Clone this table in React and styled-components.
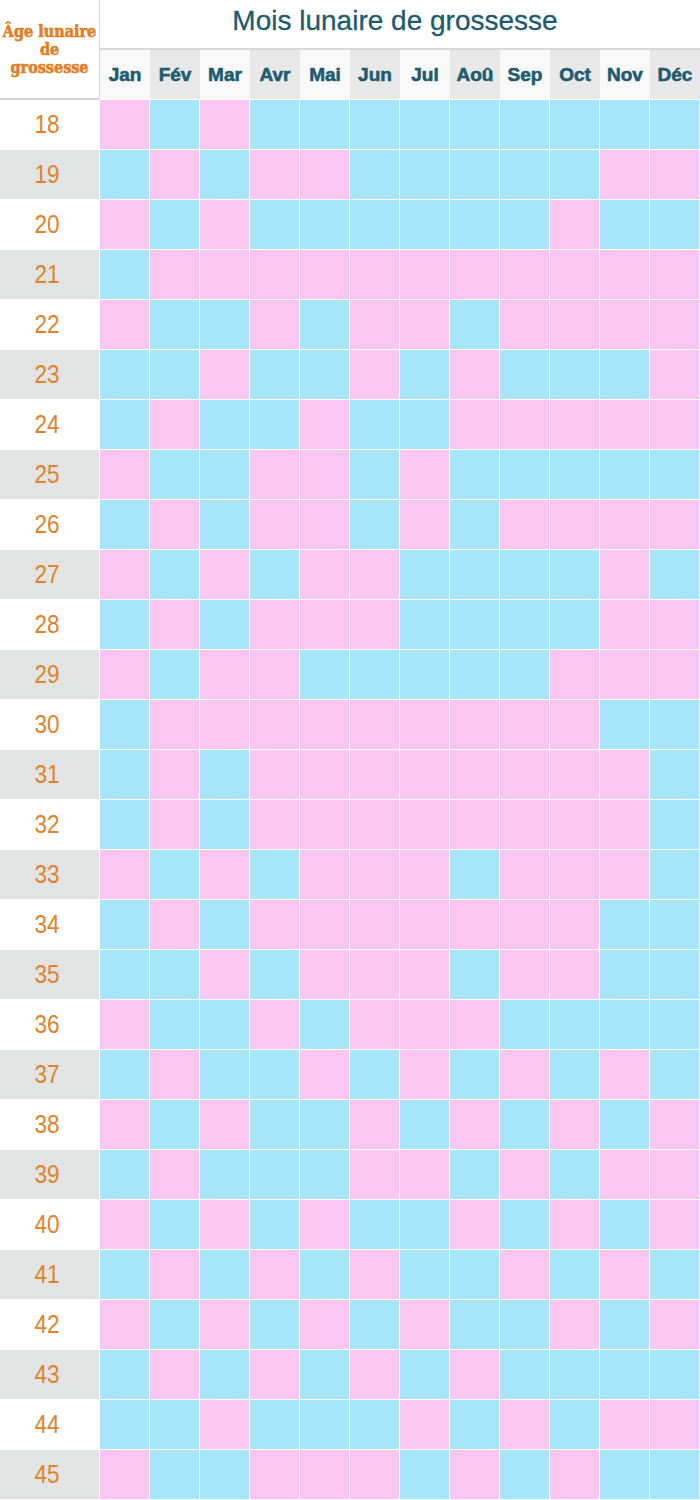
import styled, { createGlobalStyle } from "styled-components";

const GlobalStyle = createGlobalStyle`
  html, body {
    margin: 0;
    padding: 0;
    background: #ffffff;
  }
`;

const MONTHS = ["Jan", "Fév", "Mar", "Avr", "Mai", "Jun", "Jul", "Aoû", "Sep", "Oct", "Nov", "Déc"];

// P = fille (rose), B = garçon (bleu)
const CHART = {
  18: "PBPBBBBBBBBB",
  19: "BPBPPBBBBBPP",
  20: "PBPBBBBBBPBB",
  21: "BPPPPPPPPPPP",
  22: "PBBPBPPBPPPP",
  23: "BBPBBPBPBBBP",
  24: "BPBBPBBPPPPP",
  25: "PBBPPBPBBBBB",
  26: "BPBPPBPBPPPP",
  27: "PBPBPPBBBBPB",
  28: "BPBPPPBBBBPP",
  29: "PBPPBBBBBPPP",
  30: "BPPPPPPPPPBB",
  31: "BPBPPPPPPPPB",
  32: "BPBPPPPPPPPB",
  33: "PBPBPPPBPPPB",
  34: "BPBPPPPPPPBB",
  35: "BBPBPPPBPPBB",
  36: "PBBPBPPPBBBB",
  37: "BPBBPBPBPBPB",
  38: "PBPBBPBPBPBP",
  39: "BPBBBPPBPBPP",
  40: "PBPBPBBPBPBP",
  41: "BPBPBPBBPBPB",
  42: "PBPBPBPBBPBP",
  43: "BPBPBPBPBBBB",
  44: "BBPBBBPBPBPP",
  45: "PBBPPPBPBPBB",
};

const Chart = styled.div`
  display: grid;
  grid-template-columns: 100px repeat(12, 50px);
  grid-template-rows: repeat(30, 50px);
  width: 700px;
  background: #ffffff;
`;

const Corner = styled.div`
  grid-column: 1;
  grid-row: 1 / span 2;
  display: flex;
  align-items: center;
  justify-content: center;
  box-sizing: border-box;
  padding-top: 2px;
  border-right: 1px solid #d6d6d6;
  border-bottom: 2px solid #d4d4d4;
  font-family: "DejaVu Serif Condensed", "Liberation Serif", serif;
  font-weight: 700;
  font-size: 16px;
  line-height: 18px;
  color: #e07f24;
  -webkit-text-stroke: 0.6px #e07f24;
  text-align: center;
`;

const Title = styled.div`
  grid-column: 2 / span 12;
  grid-row: 1;
  display: flex;
  align-items: center;
  justify-content: center;
  padding-right: 10px;
  padding-bottom: 6px;
  font-family: "Liberation Sans", Arial, sans-serif;
  font-size: 28px;
  color: #1e5b6f;
  -webkit-text-stroke: 0.3px #1e5b6f;
  border-bottom: 2px solid #d8d8d8;
  box-sizing: border-box;
`;

const MonthCell = styled.div`
  grid-row: 2;
  display: flex;
  align-items: center;
  justify-content: center;
  background: ${(p) => (p.$shaded ? "#e8e8e8" : "#f8f8f8")};
  font-family: "Liberation Sans", Arial, sans-serif;
  font-weight: 700;
  font-size: 19px;
  color: #1e5b6f;
  -webkit-text-stroke: 0.6px #1e5b6f;
  border-bottom: 1px solid #ffffff;
  box-sizing: border-box;
`;

const AgeCell = styled.div`
  grid-column: 1;
  display: flex;
  align-items: center;
  justify-content: center;
  padding-right: 6px;
  background: ${(p) => (p.$shaded ? "#e2e4e4" : "#ffffff")};
  border-bottom: 1px solid #ffffff;
  border-right: 1px solid #ffffff;
  box-sizing: border-box;
`;

const AgeNumber = styled.span`
  display: inline-block;
  transform: scaleX(0.9);
  font-family: "Liberation Sans", Arial, sans-serif;
  font-size: 25px;
  color: #e0822a;
`;

const GenderCell = styled.div`
  background: ${(p) => (p.$girl ? "#f9c6f2" : "#a7e5f8")};
  border-right: 1px solid #ffffff;
  border-bottom: 1px solid #ffffff;
  box-sizing: border-box;
`;

export default function App() {
  const ages = Object.keys(CHART).map(Number);
  return (
    <>
      <GlobalStyle />
      <Chart>
        <Corner>
          Âge lunaire
          <br />
          de
          <br />
          grossesse
        </Corner>
        <Title>Mois lunaire de grossesse</Title>
        {MONTHS.map((m, i) => (
          <MonthCell key={m} $shaded={i % 2 === 1}>
            {m}
          </MonthCell>
        ))}
        {ages.map((age, r) => (
          <Row key={age} age={age} shaded={r % 2 === 1} pattern={CHART[age]} />
        ))}
      </Chart>
    </>
  );
}

function Row({ age, shaded, pattern }) {
  return (
    <>
      <AgeCell $shaded={shaded}>
        <AgeNumber>{age}</AgeNumber>
      </AgeCell>
      {pattern.split("").map((c, i) => (
        <GenderCell key={i} $girl={c === "P"} />
      ))}
    </>
  );
}
